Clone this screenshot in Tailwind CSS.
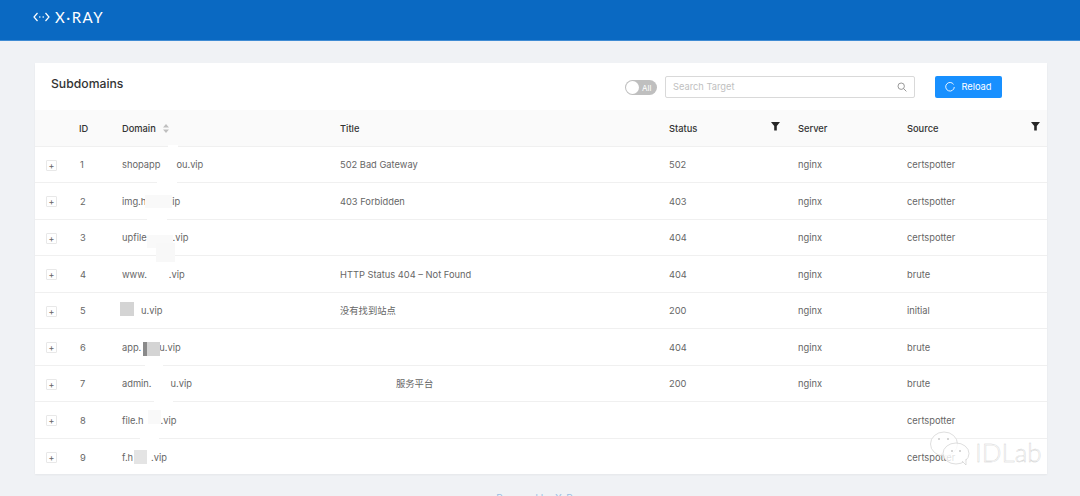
<!DOCTYPE html>
<html lang="en">
<head>
  <meta charset="UTF-8" />
  <title>X-Ray Subdomains</title>
  <script src="https://cdn.jsdelivr.net/npm/@tailwindcss/browser@4"></script>
</head>
<body class="bg-[#f0f2f5] h-[496px] overflow-hidden font-['Inter','Noto_Sans_CJK_SC',sans-serif] text-[9.3px] text-[#666666]">
  <header class="h-[41px] bg-[#0a69c2] border-b border-[#3f8bd3] pl-[33px] flex items-center pb-[6px]">
    <svg width="17" height="10" viewBox="0 0 17 10" fill="none" stroke="#fff" stroke-width="1.2">
      <path d="M4.5 1 L1 5 L4.5 9" />
      <path d="M12.5 1 L16 5 L12.5 9" />
      <circle cx="6.8" cy="5" r="0.8" fill="#fff" stroke="none" />
      <circle cx="10.2" cy="5" r="0.8" fill="#fff" stroke="none" />
    </svg>
    <span class="ml-[5px] text-white text-[15px] font-normal tracking-[1.5px] leading-none font-['Lato',sans-serif]">X·RAY</span>
  </header>

  <main class="pt-[22px] px-[35px]">
    <section class="relative w-[1012px] h-[411px] bg-white shadow-[0_1px_2px_rgba(0,0,0,0.05)]">
      <div class="h-[47px] flex items-center pl-[16px] pt-[1px]">
        <h1 class="w-[72px] mb-[5px] text-[12.2px] font-medium text-[#333333] whitespace-nowrap">Subdomains</h1>
        <div class="ml-[502px] w-[32px] h-[15px] rounded-full bg-[#bfbfbf] relative">
          <span class="absolute left-[1px] top-[1px] w-[13px] h-[13px] rounded-full bg-white"></span>
          <span class="absolute left-[17px] top-[2px] text-[8px] text-white">All</span>
        </div>
        <div class="ml-[8px] w-[250px] h-[22px] border border-[#d9d9d9] rounded-[2px] flex items-center justify-between pl-[7px] pr-[7px]">
          <span class="text-[#bfbfbf]">Search Target</span>
          <svg width="10" height="10" viewBox="0 0 10 10" fill="none" stroke="#8c8c8c" stroke-width="0.9">
            <circle cx="4.2" cy="4.2" r="3.2" />
            <path d="M6.6 6.6 L9.4 9.4" />
          </svg>
        </div>
        <button class="ml-[20px] w-[67px] h-[22px] bg-[#1890ff] rounded-[2px] text-white flex items-center justify-center gap-[6px]">
          <svg width="10" height="10" viewBox="0 0 10 10" fill="none" stroke="#fff" stroke-width="0.9">
            <path d="M8.6 2.4 A4.3 4.3 0 1 0 9.3 5" />
          </svg>
          Reload
        </button>
      </div>

      <table class="w-full table-fixed border-collapse">
        <colgroup>
          <col class="w-[35px]" />
          <col class="w-[52px]" />
          <col class="w-[218px]" />
          <col class="w-[329px]" />
          <col class="w-[129px]" />
          <col class="w-[109px]" />
          <col class="w-[140px]" />
        </colgroup>
        <thead>
          <tr class="h-[36px] bg-[#fafafa] border-b border-[#f0f0f0] text-left text-[#333333] [&_th]:pt-[2px]">
            <th class="font-medium"></th>
            <th class="font-medium pl-[9px]">ID</th>
            <th class="font-medium">
              <span class="inline-flex items-center gap-[7px]">Domain
                <svg width="6" height="9" viewBox="0 0 6 9" fill="#bfbfbf"><path d="M3 0 L6 3.6 H0 Z M3 9 L6 5.4 H0 Z" /></svg>
              </span>
            </th>
            <th class="font-medium">Title</th>
            <th class="font-medium relative">Status
              <svg class="absolute right-[18px] top-[12px]" width="9" height="9" viewBox="0 0 9 9" fill="#262626"><path d="M0 0 H9 L5.8 4 V8.5 H3.2 V4 Z" /></svg>
            </th>
            <th class="font-medium">Server</th>
            <th class="font-medium relative">Source
              <svg class="absolute right-[7px] top-[12px]" width="9" height="9" viewBox="0 0 9 9" fill="#262626"><path d="M0 0 H9 L5.8 4 V8.5 H3.2 V4 Z" /></svg>
            </th>
          </tr>
        </thead>
        <tbody class="[&_td]:pt-[2px]">
          <tr class="h-[36.5px] border-b border-[#f0f0f0]">
            <td><span class="ml-[11px] w-[11px] h-[11px] border border-[#e8e8e8] rounded-[1px] flex items-center justify-center text-[9px] leading-none">+</span></td>
            <td class="pl-[10px]">1</td><td>shopapp<span class="inline-block w-[16px]"></span>ou.vip</td><td>502 Bad Gateway</td><td>502</td><td>nginx</td><td>certspotter</td>
          </tr>
          <tr class="h-[36.5px] border-b border-[#f0f0f0]">
            <td><span class="ml-[11px] w-[11px] h-[11px] border border-[#e8e8e8] rounded-[1px] flex items-center justify-center text-[9px] leading-none">+</span></td>
            <td class="pl-[10px]">2</td><td>img.h<span class="inline-block w-[26px]"></span>ip</td><td>403 Forbidden</td><td>403</td><td>nginx</td><td>certspotter</td>
          </tr>
          <tr class="h-[36.5px] border-b border-[#f0f0f0]">
            <td><span class="ml-[11px] w-[11px] h-[11px] border border-[#e8e8e8] rounded-[1px] flex items-center justify-center text-[9px] leading-none">+</span></td>
            <td class="pl-[10px]">3</td><td>upfile<span class="inline-block w-[26px]"></span>.vip</td><td></td><td>404</td><td>nginx</td><td>certspotter</td>
          </tr>
          <tr class="h-[36.5px] border-b border-[#f0f0f0]">
            <td><span class="ml-[11px] w-[11px] h-[11px] border border-[#e8e8e8] rounded-[1px] flex items-center justify-center text-[9px] leading-none">+</span></td>
            <td class="pl-[10px]">4</td><td>www.<span class="inline-block w-[22px]"></span>.vip</td><td>HTTP Status 404 – Not Found</td><td>404</td><td>nginx</td><td>brute</td>
          </tr>
          <tr class="h-[36.5px] border-b border-[#f0f0f0]">
            <td><span class="ml-[11px] w-[11px] h-[11px] border border-[#e8e8e8] rounded-[1px] flex items-center justify-center text-[9px] leading-none">+</span></td>
            <td class="pl-[10px]">5</td><td><span class="inline-block w-[19px]"></span>u.vip</td><td>没有找到站点</td><td>200</td><td>nginx</td><td>initial</td>
          </tr>
          <tr class="h-[36.5px] border-b border-[#f0f0f0]">
            <td><span class="ml-[11px] w-[11px] h-[11px] border border-[#e8e8e8] rounded-[1px] flex items-center justify-center text-[9px] leading-none">+</span></td>
            <td class="pl-[10px]">6</td><td>app.<span class="inline-block w-[18px]"></span>u.vip</td><td></td><td>404</td><td>nginx</td><td>brute</td>
          </tr>
          <tr class="h-[36.5px] border-b border-[#f0f0f0]">
            <td><span class="ml-[11px] w-[11px] h-[11px] border border-[#e8e8e8] rounded-[1px] flex items-center justify-center text-[9px] leading-none">+</span></td>
            <td class="pl-[10px]">7</td><td>admin.<span class="inline-block w-[19px]"></span>u.vip</td><td class="pl-[56px]">服务平台</td><td>200</td><td>nginx</td><td>brute</td>
          </tr>
          <tr class="h-[36.5px] border-b border-[#f0f0f0]">
            <td><span class="ml-[11px] w-[11px] h-[11px] border border-[#e8e8e8] rounded-[1px] flex items-center justify-center text-[9px] leading-none">+</span></td>
            <td class="pl-[10px]">8</td><td>file.h<span class="inline-block w-[17px]"></span>.vip</td><td></td><td></td><td></td><td>certspotter</td>
          </tr>
          <tr class="h-[36.5px]">
            <td><span class="ml-[11px] w-[11px] h-[11px] border border-[#e8e8e8] rounded-[1px] flex items-center justify-center text-[9px] leading-none">+</span></td>
            <td class="pl-[10px]">9</td><td>f.h<span class="inline-block w-[18px]"></span>.vip</td><td></td><td></td><td></td><td>certspotter</td>
          </tr>
        </tbody>
      </table>

      <!-- redaction patches from the screenshot -->
      <div class="absolute left-[85px] top-[239px] w-[14px] h-[14px] bg-[#d4d4d4]"></div>
      <div class="absolute left-[108px] top-[279px] w-[4px] h-[14px] bg-[#8a8a8a]"></div>
      <div class="absolute left-[112px] top-[279px] w-[13px] h-[14px] bg-[#d4d4d4]"></div>
      <div class="absolute left-[99px] top-[387px] w-[13px] h-[14px] bg-[#e4e4e4]"></div>
      <div class="absolute left-[133px] top-[82px] w-[10px] h-[6px] bg-white"></div>
      <div class="absolute left-[122px] top-[110px] w-[20px] h-[10px] bg-white"></div>
      <div class="absolute left-[110px] top-[132px] w-[27px] h-[13px] bg-[#f9f9f9]"></div>
      <div class="absolute left-[112px] top-[145px] w-[20px] h-[12px] bg-white"></div>
      <div class="absolute left-[112px] top-[172px] w-[26px] h-[13px] bg-[#f9f9f9]"></div>
      <div class="absolute left-[121px] top-[180px] w-[19px] h-[19px] bg-[#f8f8f8]"></div>
      <div class="absolute left-[110px] top-[300px] w-[18px] h-[5px] bg-white"></div>
      <div class="absolute left-[119px] top-[336px] w-[19px] h-[5px] bg-white"></div>
      <div class="absolute left-[113px] top-[347px] w-[13px] h-[14px] bg-[#f9f9f9]"></div>
      <div class="absolute left-[105px] top-[373px] w-[19px] h-[4px] bg-white"></div>
    </section>
    <p class="mt-[17px] text-center text-[#9bbfe3] text-[10px]">Powered by X-Ray</p>
  </main>

  <!-- watermark -->
  <div class="absolute left-[930px] top-[431px] flex items-center">
    <svg width="42" height="35" viewBox="0 0 42 35" fill="#ffffff" fill-opacity="0.8" stroke="#d0d0d0" stroke-width="0.7">
      <ellipse cx="14" cy="13" rx="13.5" ry="12" />
      <ellipse cx="26" cy="22.5" rx="13" ry="10.5" />
      <path d="M32 30 L36 34 L36 28" />
      <circle cx="9" cy="8" r="1" fill="#bbbbbb" stroke="none" />
      <circle cx="18" cy="8" r="1" fill="#bbbbbb" stroke="none" />
      <circle cx="22" cy="20" r="1" fill="#bbbbbb" stroke="none" />
      <circle cx="30" cy="20" r="1" fill="#bbbbbb" stroke="none" />
    </svg>
    <span class="text-[26px] font-light leading-none ml-[3px] mt-[6px] text-white [-webkit-text-stroke:0.4px_#cfcfcf] font-['Lato',sans-serif]">IDLab</span>
  </div>
</body>
</html>
